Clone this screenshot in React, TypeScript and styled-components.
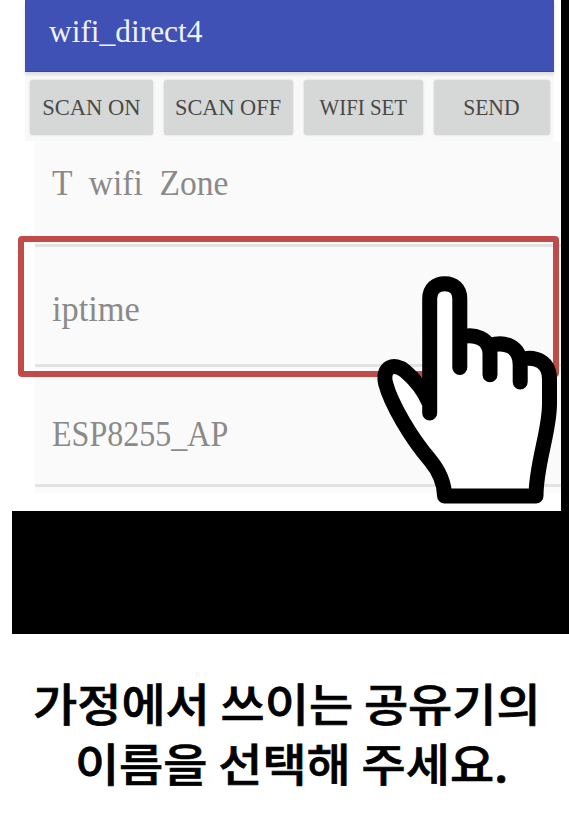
import React from "react";
import styled, { createGlobalStyle } from "styled-components";

const GlobalStyle = createGlobalStyle`
  * { box-sizing: border-box; }
  body { margin: 0; background: #fff; overflow: hidden; }
`;

const Page = styled.main`
  width: 569px;
  height: 824px;
  background: #fff;
  overflow: hidden;
`;

const Stage = styled.section`
  position: relative;
  height: 634px;
  margin-left: 12px;
  background: #000;
`;

const Screen = styled.div`
  width: 549px;
  height: 510.5px;
  padding-left: 13px;
  background: #fff;
`;

const AppBar = styled.header`
  position: relative;
  width: 529px;
  height: 71.5px;
  padding: 14px 0 0 24px;
  background: #3f51b5;
  border-bottom: 1px solid #3444ad;
  box-shadow: 0 3px 3px #deded9;
  color: #f0f2ff;
`;

const Toolbar = styled.div`
  display: flex;
  gap: 11px;
  width: 529px;
  height: 69px;
  padding: 8px 0 0 5px;
  background: #f9f9f9;
`;

const ToolButton = styled.button<{ $width: number }>`
  flex: none;
  display: flex;
  align-items: center;
  justify-content: center;
  width: ${(p) => p.$width}px;
  height: 55px;
  padding: 0 0 1px;
  border: 0;
  border-radius: 3px;
  background: #d6d8d7;
  box-shadow: 0 0 2px #c9c9c9;
  color: #484848;
`;

const Label = styled.span<{ $size: number; $stretch: number; $origin?: string }>`
  display: inline-block;
  flex: none;
  font-family: "Liberation Serif", serif;
  font-size: ${(p) => p.$size}px;
  line-height: 36px;
  white-space: pre;
  transform: scaleX(${(p) => p.$stretch});
  transform-origin: ${(p) => p.$origin ?? "left"};
`;

const NetworkList = styled.ul`
  width: 526.5px;
  margin: 0 0 0 9.5px;
  padding: 0;
  list-style: none;
  background: #fafafa;
`;

const NetworkRow = styled.li<{ $height: number; $drop: number }>`
  display: flex;
  align-items: flex-end;
  height: ${(p) => p.$height}px;
  padding: 0 0 ${(p) => p.$drop}px 17.5px;
  border-bottom: 3px solid #e1e2e2;
  color: #8a8a8a;
`;

const ListFoot = styled.div`
  width: 526px;
  height: 6px;
  margin-left: 9.5px;
  background: #fafafa;
`;

const Selection = styled.div`
  position: absolute;
  left: 6px;
  top: 235.5px;
  width: 541px;
  height: 141px;
  border: 6.5px solid #c04b48;
  border-radius: 4px;
`;

const Pointer = styled.svg`
  position: absolute;
  left: 360px;
  top: 270px;
`;

const Caption = styled.div`
  display: flex;
  flex-direction: column;
  align-items: center;
  padding-top: 39px;
`;

const CaptionLine = styled.p<{ $shift: number }>`
  margin: 0;
  font: 500 45px/60px "Noto Sans CJK KR", sans-serif;
  color: #000;
  white-space: nowrap;
  -webkit-text-stroke: 0.7px #000;
  stroke-linejoin: round;
  transform: translateX(${(p) => p.$shift}px) scaleX(1.067);
`;

const actions = [
  { name: "SCAN ON", width: 123, stretch: 0.94 },
  { name: "SCAN OFF", width: 129, stretch: 0.93 },
  { name: "WIFI SET", width: 118.5, stretch: 0.87 },
  { name: "SEND", width: 116.5, stretch: 0.9 },
];

const networks = [
  { name: "T  wifi  Zone", height: 106, stretch: 0.932, drop: 42.5 },
  { name: "iptime", height: 120, stretch: 0.955, drop: 37 },
  { name: "ESP8255_AP", height: 120, stretch: 0.89, drop: 31.5 },
];

function HandPointer() {
  return (
    <Pointer width="197" height="241" viewBox="372 270 197 241" aria-hidden="true">
      <path
        d="M429.7 413V298.5C429.7 289 436 283.7 444.8 283.7C453.5 283.7 459.8 289 459.8 298.5V337C475 333 490 338 490 353V346C505 341 520 347 520.2 365V359.5C537 354 550 363 550 379V404C550 432 536 464 536 496H444.5C444.5 482 439 471 430 460C411 438 391 404 385.5 383C382 367 394 362 405 371C417 381 425 393 429.7 404Z"
        fill="#fff"
      />
      <path
        d="M429.7 413V298.5C429.7 289 436 283.7 444.8 283.7C453.5 283.7 459.8 289 459.8 298.5V367.5M459.8 337.5C474 333 490 338 490 354V374.8M490 345.5C505 341 520 346 520.2 365V382M520.2 359.5C537 355 549.5 363 549.5 379V404C549.5 432 536 464 536 496H444.5C444.5 482 439 471 430 460C411 438 391 404 385.5 383C382 367 394 362 405 371C417 381 425 393 429.7 404"
        fill="none"
        stroke="#000"
        strokeWidth="15"
        strokeLinecap="round"
        strokeLinejoin="round"
      />
    </Pointer>
  );
}

export default function App() {
  return (
    <Page>
      <GlobalStyle />
      <Stage>
        <Screen>
          <AppBar>
            <Label $size={31} $stretch={1.013}>wifi_direct4</Label>
          </AppBar>
          <Toolbar>
            {actions.map((a) => (
              <ToolButton key={a.name} $width={a.width}>
                <Label $size={24} $stretch={a.stretch} $origin="center">{a.name}</Label>
              </ToolButton>
            ))}
          </Toolbar>
          <NetworkList>
            {networks.map((n) => (
              <NetworkRow key={n.name} $height={n.height} $drop={n.drop}>
                <Label $size={36} $stretch={n.stretch}>{n.name}</Label>
              </NetworkRow>
            ))}
          </NetworkList>
          <ListFoot />
        </Screen>
        <Selection />
        <HandPointer />
      </Stage>
      <Caption>
        <CaptionLine $shift={2}>가정에서 쓰이는 공유기의</CaptionLine>
        <CaptionLine $shift={7.5}>이름을 선택해 주세요.</CaptionLine>
      </Caption>
    </Page>
  );
}
